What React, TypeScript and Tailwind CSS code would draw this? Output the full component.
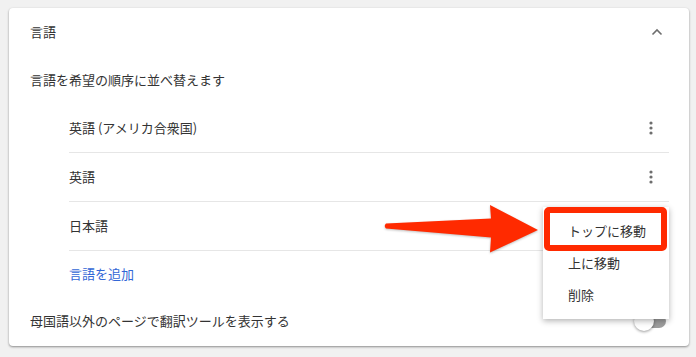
import React from 'react';

const font = { fontFamily: '"Noto Sans CJK JP", "Noto Sans", sans-serif' };

const Kebab: React.FC = () => (
    <svg width="4" height="14" viewBox="0 0 4 14" className="text-[#6e6e6e]">
        <circle cx="2" cy="2" r="1.6" fill="currentColor" />
        <circle cx="2" cy="7" r="1.6" fill="currentColor" />
        <circle cx="2" cy="12" r="1.6" fill="currentColor" />
    </svg>
);

const LanguageRow: React.FC<{ label: string }> = ({ label }) => (
    <div className="flex h-[49px] items-center justify-between border-b border-[#e6e6e6]">
        <span>{label}</span>
        <div className="flex w-9 justify-center">
            <Kebab />
        </div>
    </div>
);

const App: React.FC = () => {
    const languages = ['英語 (アメリカ合衆国)', '英語', '日本語'];

    return (
        <div className="relative h-[357px] w-[696px] overflow-hidden bg-[#f1f1f1] pl-[9px] pt-2 text-[13px] text-[#333]" style={font}>
            <div className="flex h-[338px] w-[680px] flex-col rounded-sm bg-white shadow-[0_1px_2px_rgba(0,0,0,0.3),0_1px_3px_rgba(0,0,0,0.15)]">
                <div className="flex h-12 items-center justify-between pl-[21px] pr-[26px]">
                    <span>言語</span>
                    <svg width="12" height="8" viewBox="0 0 12 8">
                        <polyline points="1.5,6.5 6,2 10.5,6.5" fill="none" stroke="#6e6e6e" strokeWidth="1.6" />
                    </svg>
                </div>
                <div className="flex h-12 items-center pl-[21px]">言語を希望の順序に並べ替えます</div>
                <div className="ml-[60px] mr-[20px] flex flex-col">
                    {languages.map(lang => (
                        <LanguageRow key={lang} label={lang} />
                    ))}
                    <div className="flex h-[46px] items-center text-[#3367d6]">言語を追加</div>
                </div>
                <div className="flex h-12 items-center justify-between pl-[21px] pr-[23px]">
                    <span>母国語以外のページで翻訳ツールを表示する</span>
                    <div className="relative flex h-4 w-[32px] items-center">
                        <div className="ml-[4px] h-[14px] w-[28px] rounded-full bg-[#9e9e9e]" />
                        <div className="absolute left-0 top-[-2px] h-5 w-5 rounded-full bg-white shadow-[0_1px_3px_rgba(0,0,0,0.4)]" />
                    </div>
                </div>
            </div>

            {/* context menu */}
            <div className="absolute left-[543px] top-[207px] flex w-[126px] flex-col bg-white py-2 shadow-[0_2px_6px_rgba(0,0,0,0.3)]">
                <div className="flex h-8 items-center pl-[25px]">トップに移動</div>
                <div className="flex h-8 items-center pl-[25px]">上に移動</div>
                <div className="flex h-8 items-center pl-[25px]">削除</div>
            </div>
            <div className="absolute left-[544px] top-[207px] h-[44px] w-[123px] rounded-[5px] border-[6px] border-[#ff2a00]" />

            {/* annotation arrow */}
            <svg className="absolute left-0 top-0" width="696" height="357">
                <path
                    d="M386 223.5 L491 218.5 L490 205 L538 230 L490 252.5 L491 237.5 L386 228.5 Q383.5 226 386 223.5 Z"
                    fill="#ff2a00"
                    style={{ filter: 'drop-shadow(0 1px 1px rgba(0,0,0,0.25))' }}
                />
            </svg>
        </div>
    );
};

export default App;
